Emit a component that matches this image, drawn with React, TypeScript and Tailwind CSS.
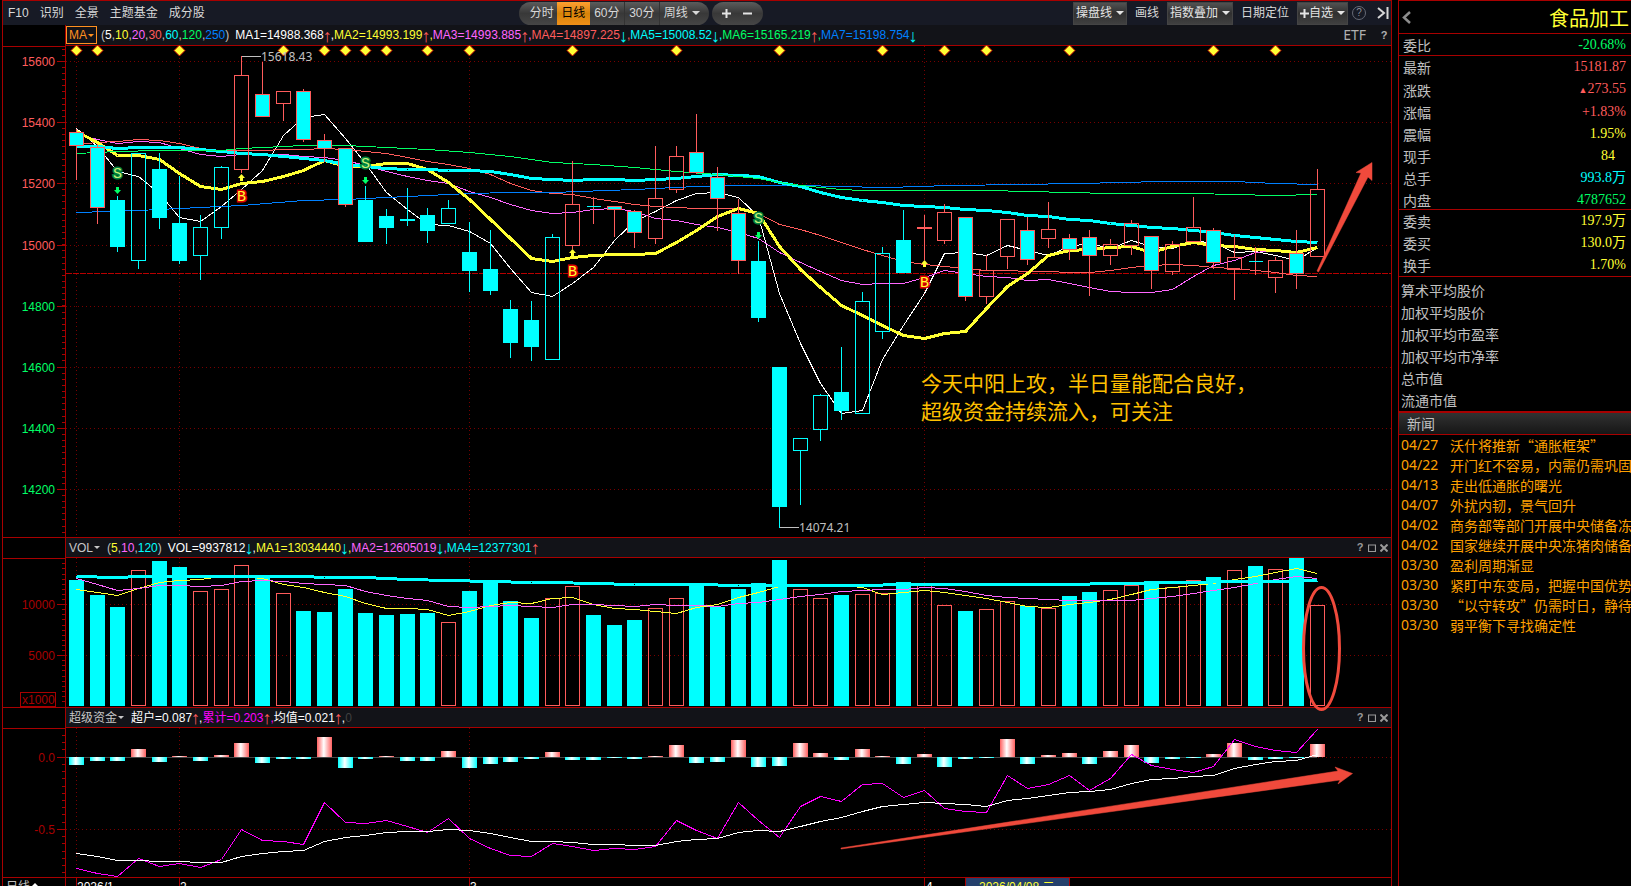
import React from "react";

const RED = "#ff5c5c";
const CYAN = "#00ffff";
const YELLOW = "#ffff33";
const PINK = "#ff66ff";
const GREEN = "#00ff66";
const BLUE = "#0080ff";
const LINE = "#a80000";
const MARK = "#f04a3c";

/* One column per trading day */
const px = (i: number) => Math.floor(76.4 + 20.68 * i);

/* Levels are kept in thirds of a pixel, snapped to the pixel row here */
const row = (v: number, top = 0) => Math.floor(v / 3) + top + 0.5;

type Kind = "c" | "f" | "h" | "k";

/* high, body top, body bottom, low, kind */
const candles: [number, number, number, number, Kind][] = [
  [388, 397, 437, 540, "f"],
  [432, 442, 623, 672, "f"],
  [588, 600, 741, 756, "c"],
  [460, 460, 782, 807, "k"],
  [459, 507, 654, 687, "c"],
  [528, 669, 783, 792, "c"],
  [645, 682, 767, 840, "k"],
  [498, 502, 683, 717, "k"],
  [169, 226, 509, 518, "h"],
  [186, 283, 350, 350, "f"],
  [274, 274, 311, 363, "h"],
  [267, 274, 419, 426, "f"],
  [402, 421, 445, 486, "f"],
  [445, 445, 614, 621, "f"],
  [558, 600, 726, 726, "c"],
  [627, 648, 684, 732, "c"],
  [564, 657, 663, 678, "c"],
  [624, 645, 693, 729, "c"],
  [600, 625, 671, 671, "k"],
  [666, 756, 813, 876, "c"],
  [690, 807, 873, 885, "c"],
  [900, 927, 1029, 1074, "c"],
  [903, 960, 1041, 1083, "c"],
  [702, 712, 1079, 1079, "k"],
  [483, 613, 738, 747, "h"],
  [593, 619, 619, 672, "f"],
  [618, 619, 629, 711, "f"],
  [630, 634, 698, 744, "f"],
  [438, 595, 716, 732, "h"],
  [438, 469, 570, 579, "h"],
  [342, 457, 518, 522, "f"],
  [501, 532, 597, 693, "f"],
  [597, 640, 782, 822, "f"],
  [723, 783, 954, 966, "c"],
  [1101, 1101, 1521, 1582, "c"],
  [1315, 1315, 1352, 1515, "k"],
  [1182, 1186, 1289, 1323, "k"],
  [1041, 1176, 1233, 1260, "c"],
  [876, 904, 1241, 1241, "k"],
  [741, 760, 995, 1017, "k"],
  [630, 720, 819, 819, "c"],
  [645, 682, 687, 780, "h"],
  [612, 637, 722, 732, "h"],
  [652, 652, 890, 903, "f"],
  [765, 811, 890, 912, "h"],
  [657, 657, 770, 807, "h"],
  [651, 691, 779, 795, "f"],
  [606, 688, 717, 744, "h"],
  [702, 715, 749, 780, "f"],
  [690, 712, 767, 888, "f"],
  [717, 733, 767, 795, "h"],
  [660, 670, 737, 765, "h"],
  [709, 709, 812, 867, "f"],
  [723, 733, 815, 825, "h"],
  [591, 682, 725, 725, "h"],
  [684, 691, 788, 807, "f"],
  [705, 772, 808, 900, "h"],
  [741, 784, 784, 825, "f"],
  [771, 781, 833, 879, "h"],
  [690, 760, 821, 867, "f"],
  [507, 568, 770, 770, "h"],
];

const ma5 = [
  385, 440, 515, 528, 580, 652, 663, 618, 568, 510, 405, 352, 343, 415, 490, 578, 628, 672, 677, 695, 730,
  805, 876, 890, 850, 803, 720, 665, 633, 602, 580, 577, 592, 650, 880, 1030, 1150, 1240, 1230, 1078, 975,
  880, 761, 758, 766, 736, 752, 766, 740, 730, 745, 722, 738, 745, 725, 728, 758, 755, 765, 782, 742,
];
const ma10 = [
  395, 428, 465, 466, 478, 520, 559, 569, 551, 545, 530, 510, 480, 500, 500, 491, 491, 507, 548, 597, 657,
  715, 775, 784, 773, 767, 763, 763, 760, 727, 690, 648, 624, 640, 740, 808, 862, 916, 945, 975, 1005, 1016,
  1000, 994, 925, 858, 820, 765, 750, 748, 741, 740, 757, 740, 728, 736, 740, 748, 752, 757, 743,
];
const ma20 = [
  403, 418, 430, 425, 428, 446, 463, 469, 463, 463, 464, 468, 473, 482, 495, 515, 530, 541, 551, 573, 592,
  614, 630, 639, 637, 628, 625, 635, 655, 662, 672, 682, 697, 715, 758, 788, 815, 842, 853, 851, 850, 833,
  811, 820, 829, 832, 840, 838, 850, 862, 873, 877, 877, 867, 829, 797, 782, 758, 750, 753, 740,
];
const ma30 = [
  432, 428, 425, 418, 421, 430, 444, 450, 451, 450, 449, 448, 445, 447, 455, 461, 473, 484, 492, 506, 524,
  549, 572, 580, 583, 594, 604, 613, 619, 623, 625, 626, 626, 640, 672, 688, 705, 728, 748, 765, 785, 794,
  799, 805, 811, 812, 813, 815, 816, 818, 810, 803, 795, 793, 797, 802, 806, 810, 818, 826, 830,
];
const ma60 = [
  438, 440, 446, 442, 442, 443, 449, 455, 459, 464, 469, 475, 482, 493, 500, 504, 507, 509, 511, 512, 514,
  523, 535, 538, 541, 538, 539, 541, 538, 535, 529, 523, 526, 530, 546, 560, 577, 592, 601, 608, 615, 619,
  623, 628, 632, 638, 645, 650, 657, 662, 671, 677, 682, 686, 690, 696, 705, 711, 717, 723, 728,
];

/* Slow lines are given by their turning points: day, level */
const ma120: [number, number][] = [
  [0, 460], [2, 455], [4, 451], [7, 450], [8, 445], [10, 440], [11, 436], [13, 437], [15, 442], [17, 447],
  [19, 457], [21, 469], [23, 486], [25, 493], [27, 502], [29, 514], [31, 522], [33, 535], [34, 546],
  [35, 556], [36, 563], [37, 568], [38, 571], [44, 572], [48, 576], [50, 579], [54, 581], [58, 585], [60, 583],
];
const ma250: [number, number][] = [
  [0, 637], [3, 630], [5, 625], [8, 615], [11, 602], [13, 597], [16, 590], [19, 581], [21, 577], [23, 576],
  [27, 568], [30, 560], [32, 556], [35, 556], [39, 562], [41, 560], [42, 557], [46, 554], [48, 550],
  [51, 548], [52, 545], [56, 545], [58, 549], [60, 553],
];

const volume = [
  135, 180, 216, 106, 78, 96, 169, 163, 91, 126, 175, 228, 231, 162, 234, 240, 237, 234, 262, 168, 138, 198,
  249, 190, 154, 240, 270, 255, 220, 190, 150, 216, 162, 144, 75, 163, 190, 180, 178, 175, 141, 150, 211, 228,
  223, 199, 213, 220, 183, 171, 166, 151, 138, 157, 136, 126, 106, 93, 103, 69, 211,
];
const volumeUp = [3, 6, 7, 8, 10, 18, 23, 24, 28, 29, 35, 36, 38, 39, 41, 42, 44, 45, 47, 50, 51, 53, 54, 56, 58, 60];
const volMa5 = [
  163, 172, 181, 160, 142, 136, 132, 125, 125, 130, 147, 157, 171, 183, 205, 220, 220, 223, 240, 229, 210,
  202, 205, 190, 187, 208, 219, 223, 229, 235, 218, 208, 187, 173, 154, 151, 151, 151, 156, 178, 172, 166,
  172, 181, 190, 202, 213, 217, 208, 201, 192, 178, 163, 157, 150, 144, 133, 123, 111, 100, 115,
];
const volMa10 = [
  130, 148, 166, 160, 152, 151, 154, 151, 140, 136, 139, 145, 148, 151, 168, 181, 189, 196, 213, 217, 214,
  211, 214, 216, 209, 208, 211, 214, 209, 211, 211, 213, 206, 202, 193, 184, 178, 169, 165, 163, 163, 157,
  160, 168, 182, 186, 190, 192, 196, 196, 196, 196, 190, 184, 175, 166, 156, 146, 133, 125, 130,
];
const volMa120: [number, number][] = [
  [0, 125], [2, 127], [3, 125], [11, 125], [12, 127], [14, 128], [15, 130], [16, 133], [18, 136], [20, 139],
  [22, 142], [23, 143], [25, 146], [27, 148], [30, 149], [32, 152], [38, 152], [40, 149], [48, 148],
  [50, 146], [54, 143], [56, 140], [58, 139], [60, 137],
];

const fund = [
  690, 678, 678, 642, 681, 663, 678, 660, 624, 684, 672, 672, 606, 699, 672, 663, 678, 678, 648, 699, 687,
  681, 672, 651, 675, 675, 669, 672, 663, 630, 684, 681, 615, 696, 693, 624, 654, 675, 642, 663, 687, 657,
  696, 672, 669, 612, 687, 660, 654, 687, 648, 630, 684, 672, 669, 657, 624, 675, 672, 669, 627,
];
const fundTotal = [
  1000, 1015, 1024, 970, 994, 985, 997, 972, 883, 915, 919, 928, 802, 861, 865, 856, 874, 892, 850, 909, 940,
  961, 964, 925, 934, 946, 940, 943, 934, 856, 886, 909, 802, 856, 907, 814, 784, 799, 748, 745, 787, 766,
  820, 828, 832, 720, 760, 748, 720, 766, 730, 659, 690, 704, 712, 694, 613, 634, 646, 653, 583,
];
const fundMean = [
  955, 965, 976, 976, 979, 979, 982, 982, 965, 956, 950, 946, 919, 907, 901, 892, 889, 889, 883, 886, 895,
  907, 919, 919, 922, 928, 928, 931, 931, 919, 913, 909, 892, 886, 889, 874, 859, 847, 829, 814, 808, 802,
  805, 808, 814, 796, 790, 781, 772, 769, 763, 745, 734, 730, 724, 720, 700, 688, 680, 676, 658,
];

const diamonds = [0, 1, 5, 10, 12, 13, 14, 15, 17, 19, 24, 29, 34, 39, 42, 44, 48, 55, 58];
const months = [0, 5, 19, 41];

const range = (n: number) => Array.from({ length: n }, (_, i) => i);

type PlotProps = {
  data: number[] | [number, number][];
  color: string;
  top?: number;
  width?: number;
};

const Plot = ({ data, color, top = 0, width = 1 }: PlotProps) => (
  <polyline
    points={data
      .map((d, i) => (Array.isArray(d) ? `${px(d[0]) + 0.5},${row(d[1], top)}` : `${px(i) + 0.5},${row(d, top)}`))
      .join(" ")}
    fill="none"
    stroke={color}
    strokeWidth={width}
    shapeRendering="crispEdges"
  />
);

type GridProps = { top: number; bottom: number; levels: number[] };

const Grid = ({ top, bottom, levels }: GridProps) => (
  <g stroke="#780000" strokeDasharray="1 3" shapeRendering="crispEdges">
    {months.map((m) => (
      <line key={m} x1={px(m) + 0.5} x2={px(m) + 0.5} y1={top} y2={bottom} />
    ))}
    {levels.map((l) => (
      <line key={l} x1={66} x2={1391} y1={l + 0.5} y2={l + 0.5} />
    ))}
  </g>
);

type AxisProps = {
  top: number;
  bottom: number;
  labels: { y: number; text: string; color: string }[];
  ticks: number[];
};

const Axis = ({ top, bottom, labels, ticks }: AxisProps) => (
  <g>
    <g stroke={LINE} shapeRendering="crispEdges">
      <line x1={65.5} x2={65.5} y1={top} y2={bottom} />
      <line x1={3} x2={65} y1={top + 1.5} y2={top + 1.5} />
      <line x1={66} x2={1391} y1={top + 0.5} y2={top + 0.5} />
      {ticks.map((t) => (
        <line key={t} x1={62} x2={65} y1={Math.floor(t) + 0.5} y2={Math.floor(t) + 0.5} />
      ))}
      {labels.map((l) => (
        <line key={l.text} x1={57} x2={65} y1={l.y + 0.5} y2={l.y + 0.5} />
      ))}
    </g>
    {labels.map((l) => (
      <text key={l.text} x={55} y={l.y + 5} textAnchor="end" fontSize={12} fill={l.color}>
        {l.text}
      </text>
    ))}
  </g>
);

const Signal = ({ day, y, buy }: { day: number; y: number; buy?: boolean }) => {
  const x = px(day) + 0.5;
  return (
    <g>
      {buy ? (
        <path d={`M${x} ${y - 22} l3.5 4 h-2 v3 h-3 v-3 h-2z`} fill={YELLOW} />
      ) : (
        <path d={`M${x} ${y + 21} l3.5 -4 h-2 v-3 h-3 v3 h-2z`} fill={GREEN} />
      )}
      <text
        x={x}
        y={y + 5}
        textAnchor="middle"
        fontSize={15}
        fontWeight={400}
        paintOrder="stroke"
        strokeWidth={3}
        stroke={buy ? "#e00000" : "#00803c"}
        fill={buy ? "#ffff33" : "#c8f07a"}
        className="font-['Liberation_Mono',monospace]"
      >
        {buy ? "B" : "S"}
      </text>
    </g>
  );
};

const priceLabels = [
  { y: 61, text: "15600", color: RED },
  { y: 122, text: "15400", color: RED },
  { y: 183, text: "15200", color: RED },
  { y: 245, text: "15000", color: RED },
  { y: 306, text: "14800", color: GREEN },
  { y: 367, text: "14600", color: GREEN },
  { y: 428, text: "14400", color: GREEN },
  { y: 489, text: "14200", color: GREEN },
];

const PriceChart = () => (
  <svg viewBox="3 45 1388 492" className="relative z-10 block h-auto w-full shrink-0 overflow-visible">
    <Grid top={46} bottom={536} levels={priceLabels.map((l) => l.y)} />
    <Axis top={45} bottom={537} labels={priceLabels} ticks={range(80).map((i) => 49.1 + 6.115 * i).filter((t) => t < 536)} />
    <line x1={66} x2={1391} y1={273.5} y2={273.5} stroke="#b80000" strokeDasharray="6 1" shapeRendering="crispEdges" />

    {diamonds.map((d) => (
      <path key={d} d={`M${px(d) + 0.5} 45 l5.5 5.5 l-5.5 5.5 l-5.5 -5.5z`} fill={YELLOW} stroke="#c00000" strokeWidth={1} />
    ))}

    <Plot data={ma5} color="#ffffff" />
    <Plot data={ma20} color={PINK} />
    <Plot data={ma30} color={RED} />
    <Plot data={ma250} color={BLUE} />
    <Plot data={ma10} color={YELLOW} width={3} />
    <Plot data={ma60} color={CYAN} width={3} />
    <Plot data={ma120} color={GREEN} />

    <g shapeRendering="crispEdges">
      {candles.map(([high, top, bottom, low, kind], i) => {
        const x = px(i) + 0.5;
        const edge = kind === "f" || kind === "h" ? RED : CYAN;
        const fill = kind === "f" || kind === "c" ? CYAN : "none";
        return (
          <g key={i} stroke={edge}>
            <line x1={x} x2={x} y1={Math.floor(high / 3)} y2={row(top)} />
            <line x1={x} x2={x} y1={row(bottom - 1)} y2={Math.ceil(low / 3)} />
            {bottom === top ? (
              <line x1={x - 7} x2={x + 7} y1={row(top)} y2={row(top)} stroke={CYAN} />
            ) : (
              <rect x={x - 7} y={row(top)} width={14} height={row(bottom - 1) - row(top)} fill={fill} />
            )}
          </g>
        );
      })}
    </g>

    <Signal day={2} y={173} />
    <Signal day={14} y={163} />
    <Signal day={33} y={218} />
    <Signal day={8} y={196} buy />
    <Signal day={24} y={271} buy />
    <Signal day={41} y={282} buy />

    {/* highest and lowest price */}
    <g fill="#c0c0c0" fontSize={12} className="font-['Noto_Sans',sans-serif]">
      <path d="M242 56.5h19M780 527.5h19" stroke="#c0c0c0" shapeRendering="crispEdges" />
      <text x={261} y={61}>15618.43</text>
      <text x={799} y={532}>14074.21</text>
    </g>

    <g fill="#ffc000" fontSize={21}>
      <text x={921} y={391}>今天中阳上攻，半日量能配合良好，</text>
      <text x={921} y={419}>超级资金持续流入，可关注</text>
    </g>

    <path d="M1317 271 L1361 173 L1356 172.5 L1372 162.5 L1372 180.5 L1368 177 L1318.5 272z" fill={MARK} stroke={MARK} strokeWidth={0.5} />
  </svg>
);

const VolumeChart = () => (
  <svg viewBox="3 557 1388 150" className="relative z-10 block h-auto w-full shrink-0 overflow-visible">
    <Grid top={558} bottom={706} levels={[604, 655]} />
    <Axis
      top={557}
      bottom={707}
      labels={[
        { y: 604, text: "10000", color: "#a80000" },
        { y: 655, text: "5000", color: "#a80000" },
      ]}
      ticks={range(29).map((i) => 558.7 + 5.1 * i)}
    />
    <rect x={20.5} y={692.5} width={35} height={14} fill="none" stroke={LINE} shapeRendering="crispEdges" />
    <text x={22} y={704} fontSize={12} fill={LINE}>x1000</text>

    <g shapeRendering="crispEdges">
      {volume.map((v, i) => {
        const up = volumeUp.includes(i);
        return (
          <rect
            key={i}
            x={px(i) - 6.5}
            y={row(v, 535)}
            width={14}
            height={705.5 - row(v, 535)}
            fill={up ? "none" : CYAN}
            stroke={up ? RED : CYAN}
          />
        );
      })}
    </g>
    <Plot data={volMa5} color={YELLOW} top={535} />
    <Plot data={volMa10} color={PINK} top={535} />
    <Plot data={volMa120} color={CYAN} top={535} width={3} />
    <ellipse cx={1321.5} cy={648.5} rx={18} ry={61} fill="none" stroke={MARK} strokeWidth={3} />
  </svg>
);

const FundChart = () => (
  <svg viewBox="3 727 1388 150" className="relative z-10 block h-auto w-full shrink-0 overflow-visible">
    <defs>
      <linearGradient id="inflow">
        <stop offset="0" stopColor="#ff6060" />
        <stop offset="0.45" stopColor="#ffffff" />
        <stop offset="1" stopColor="#ff6060" />
      </linearGradient>
      <linearGradient id="outflow">
        <stop offset="0" stopColor="#00ffff" />
        <stop offset="0.45" stopColor="#ffffff" />
        <stop offset="1" stopColor="#00ffff" />
      </linearGradient>
    </defs>
    <Grid top={728} bottom={876} levels={[757, 829]} />
    <Axis
      top={727}
      bottom={877}
      labels={[
        { y: 757, text: "0.0", color: "#a80000" },
        { y: 829, text: "-0.5", color: "#a80000" },
      ]}
      ticks={range(20).map((i) => 735.5 + 7.22 * i)}
    />
    <line x1={66} x2={1317} y1={757.5} y2={757.5} stroke="#484848" shapeRendering="crispEdges" />
    {fund.map((v, i) => {
      const y = v / 3 + 535;
      return v < 666 ? (
        <rect key={i} x={px(i) - 7} y={y} width={15} height={757 - y} fill="url(#inflow)" />
      ) : (
        <rect key={i} x={px(i) - 7} y={757} width={15} height={y - 757} fill="url(#outflow)" />
      );
    })}
    <Plot data={fundTotal} color="#ff00ff" top={535} />
    <Plot data={fundMean} color="#ffffff" top={535} />
    <path d="M841 848 L1338 771 L1335 767 L1352.5 773.5 L1338 784 L1340 780 L841 849z" fill={MARK} stroke={MARK} strokeWidth={0.5} />
  </svg>
);

const DateAxis = () => (
  <svg viewBox="3 877 1388 20" className="block h-auto w-full shrink-0">
    <path
      d="M3 877.5H1391M65.5 877v20M76.5 877v20M179.5 877v20M469.5 877v20M924.5 877v20"
      stroke={LINE}
      shapeRendering="crispEdges"
    />
    <rect x={965.5} y={877.5} width={104} height={20} fill="#24406c" stroke={LINE} shapeRendering="crispEdges" />
    <g fontSize={12} fill="#ffffff">
      <text x={6} y={891} fill="#c0c0c0">日线</text>
      <path d="M31 887l4 -4 4 4z" />
      <text x={77} y={891}>2026/1</text>
      <text x={180} y={891}>2</text>
      <text x={470} y={891}>3</text>
      <text x={926} y={891}>4</text>
      <text x={979} y={891} fill={YELLOW}>2026/04/08 二</text>
    </g>
  </svg>
);

const Caret = () => <span className="inline-block border-x-4 border-t-4 border-x-transparent border-t-current" />;
const SmallCaret = () => <span className="inline-block border-x-3 border-t-3 border-x-transparent border-t-current" />;

const PlusIcon = () => (
  <svg viewBox="0 0 9 9" className="size-[9px]">
    <path d="M0 4.5h9M4.5 0v9" stroke="#e4e4e4" strokeWidth={2} />
  </svg>
);

const toolButton =
  "flex h-[23px] items-center gap-1 border border-[#444] bg-linear-to-b from-[#525252] via-[#303030] to-[#404040] px-[2px] text-[#e4e4e4]";

const Toolbar = () => (
  <header className="flex h-6 shrink-0 items-center justify-between bg-[#171a25] text-xs whitespace-nowrap text-[#d8d8d8]">
    <nav className="flex gap-[11px] pr-1 pl-[5px]">
      <a href="#">F10</a>
      <a href="#">识别</a>
      <a href="#">全景</a>
      <a href="#">主题基金</a>
      <a href="#">成分股</a>
    </nav>

    <div className="flex gap-[3px]">
      <div className="flex h-[23px] overflow-hidden rounded-full bg-linear-to-b from-[#5c5c5c] via-[#383838] to-[#464646]">
        <button className="w-[38px] pl-2">分时</button>
        <button className="w-[33px] bg-linear-to-b from-[#ffa030] via-[#d88408] to-[#f09018] text-black">日线</button>
        <button className="w-[35px] border-r border-[#333]">60分</button>
        <button className="w-[35px] border-r border-[#333]">30分</button>
        <button className="flex w-[49px] items-center gap-1 pl-1" aria-haspopup="menu">
          周线
          <Caret />
        </button>
      </div>
      <div className="flex h-[23px] w-[51px] items-center justify-center gap-3 rounded-full bg-linear-to-b from-[#5c5c5c] via-[#383838] to-[#464646]">
        <button aria-label="放大">
          <PlusIcon />
        </button>
        <button aria-label="缩小">
          <svg viewBox="0 0 9 9" className="size-[9px]"><path d="M0 4.5h9" stroke="#e4e4e4" strokeWidth={2} /></svg>
        </button>
      </div>
    </div>

    <div className="flex items-center gap-2 pr-[2px]">
      <button className={toolButton} aria-haspopup="menu">
        操盘线
        <Caret />
      </button>
      <button>画线</button>
      <button className={toolButton} aria-haspopup="menu">
        指数叠加
        <Caret />
      </button>
      <button>日期定位</button>
      <button className={toolButton} aria-haspopup="menu">
        <span className="flex items-center">
          <PlusIcon />
          自选
        </span>
        <Caret />
      </button>
      <button className="-ml-1 flex size-[14px] items-center justify-center rounded-full border border-[#666a76] text-[10px] text-[#8a8e98]">?</button>
      <button className="ml-[3px]" aria-label="收起">
        <svg viewBox="0 0 12 12" className="size-3" fill="none" stroke="#d8d8d8" strokeWidth={2}>
          <path d="M1 1l6 5-6 5M10.5 0v12" />
        </svg>
      </button>
    </div>
  </header>
);

const arrow = "inline-flex h-3 w-[7px] items-center justify-center align-middle text-[18px] leading-3";

const Up = () => <span className={`${arrow} text-[#ff5c5c]`}>↑</span>;
const Down = () => <span className={`${arrow} text-[#00ffff]`}>↓</span>;

const PaneControls = () => (
  <div className="ml-auto flex items-center gap-1 pr-[3px] text-[#9a9a9a]">
    <button className="w-2 text-[11px] font-bold">?</button>
    <button aria-label="最大化">
      <svg viewBox="0 0 8 8" className="size-2" fill="none" stroke="currentColor"><path d="M0.5 1h7v6.5h-7z M0 1h8" strokeWidth={1.2} /></svg>
    </button>
    <button aria-label="关闭">
      <svg viewBox="0 0 8 8" className="size-2" stroke="currentColor" strokeWidth={2}><path d="M0.5 0.5l7 7M7.5 0.5l-7 7" /></svg>
    </button>
  </div>
);

type PaneHeaderProps = { children: React.ReactNode; first?: boolean };

const PaneHeader = ({ children, first }: PaneHeaderProps) => (
  <div className={`flex h-5 shrink-0 pl-[62px] ${first ? "" : "border-t border-[#a80000]"}`}>
    <div className="flex flex-1 items-center border-l border-[#a80000] bg-[#121318] text-xs whitespace-nowrap">
      {children}
    </div>
  </div>
);

type Stat = { label: string; value: React.ReactNode; color: string; inset?: boolean };

const quote: Stat[] = [
  { label: "最新", value: "15181.87", color: "text-[#ff5c5c]" },
  { label: "涨跌", value: <><span className="text-[9px]">▲</span>273.55</>, color: "text-[#ff5c5c]" },
  { label: "涨幅", value: "+1.83%", color: "text-[#ff5c5c]" },
  { label: "震幅", value: "1.95%", color: "text-[#ffff33]" },
  { label: "现手", value: "84", color: "text-[#ffff33]", inset: true },
  { label: "总手", value: "993.8万", color: "text-[#00ffff]" },
  { label: "内盘", value: "4787652", color: "text-[#00ff66]" },
];

const orders: Stat[] = [
  { label: "委卖", value: "197.9万", color: "text-[#ffff33]" },
  { label: "委买", value: "130.0万", color: "text-[#ffff33]" },
  { label: "换手", value: "1.70%", color: "text-[#ffff33]" },
];

const averages = ["算术平均股价", "加权平均股价", "加权平均市盈率", "加权平均市净率", "总市值", "流通市值"];

const news = [
  ["04/27", "沃什将推新“通胀框架”"],
  ["04/22", "开门红不容易，内需仍需巩固"],
  ["04/13", "走出低通胀的曙光"],
  ["04/07", "外扰内韧，景气回升"],
  ["04/02", "商务部等部门开展中央储备冻"],
  ["04/02", "国家继续开展中央冻猪肉储备"],
  ["03/30", "盈利周期渐显"],
  ["03/30", "紧盯中东变局，把握中国优势"],
  ["03/30", "“以守转攻”仍需时日，静待"],
  ["03/30", "弱平衡下寻找确定性"],
];

const Stats = ({ rows }: { rows: Stat[] }) => (
  <table className="w-full text-sm leading-[22px]">
    <tbody>
      {rows.map((r) => (
        <tr key={r.label}>
          <th scope="row" className="h-[22px] p-0 pl-1 text-left font-normal text-[#c0c0c0]">
            {r.label}
          </th>
          <td
            className={`h-[22px] p-0 text-right font-['Liberation_Serif','Noto_Sans_CJK_SC',serif] ${
              r.inset ? "pr-4" : "pr-[5px]"
            } ${r.color}`}
          >
            {r.value}
          </td>
        </tr>
      ))}
    </tbody>
  </table>
);

const Sidebar = () => (
  <aside className="w-[233px] shrink-0 overflow-hidden border-t border-l border-[#a80000] font-['Noto_Sans_CJK_SC',sans-serif]">
    <div className="flex h-[33px] items-center justify-between border-b border-[#a80000] pr-[2px] pl-[3px]">
      <button aria-label="返回">
        <svg viewBox="0 0 9 13" className="h-[13px] w-[9px]" fill="none" stroke="#8c8c8c" strokeWidth={2.5}>
          <path d="M8 1L2 6.5l6 5.5" />
        </svg>
      </button>
      <h1 className="pt-[2px] text-[20px] leading-8 text-[#ffff33]">食品加工</h1>
    </div>
    <div className="h-[22px] border-b border-[#a80000]">
      <Stats rows={[{ label: "委比", value: "-20.68%", color: "text-[#00ff66]" }]} />
    </div>
    <div className="h-[154px] border-b border-[#a80000]">
      <Stats rows={quote} />
    </div>
    <div className="border-b border-[#a80000]">
      <Stats rows={orders} />
    </div>
    <ul className="h-[136px] border-b-2 border-[#a80000] pt-[2px] pl-[2px] text-sm leading-[22px] text-[#c0c0c0]">
      {averages.map((a) => (
        <li key={a}>{a}</li>
      ))}
    </ul>
    <h2 className="h-[22px] border-b border-[#a80000] bg-linear-to-b from-[#323232] to-[#161616] pl-2 text-sm leading-5 text-[#c0c0c0]">
      新闻
    </h2>
    <ul className="pl-[2px] text-sm leading-5 whitespace-nowrap text-[#ffa000]">
      {news.map(([date, title]) => (
        <li key={title}>
          <a href="#" className="flex">
            <span className="w-[49px] shrink-0 font-['Noto_Sans',sans-serif]">{date}</span>
            <span>{title}</span>
          </a>
        </li>
      ))}
    </ul>
  </aside>
);

const App = () => {
  return (
    <div className="flex h-screen gap-[6px] overflow-hidden bg-black pl-[2px] font-['Liberation_Sans','Noto_Sans_CJK_SC',sans-serif]">
      <main className="flex min-w-0 flex-1 flex-col border-x border-t border-[#a80000]">
        <Toolbar />

        <PaneHeader first>
          <button className="flex h-[18px] items-center gap-px border border-[#ff9020] px-[2px] text-[#ff9020]" aria-haspopup="menu">
            MA
            <SmallCaret />
          </button>
          <span className="ml-1 text-[#c0c0c0]">
            (<span className="text-white">5</span>,<span className="text-[#ffff33]">10</span>,
            <span className="text-[#ff66ff]">20</span>,<span className="text-[#ff5c5c]">30</span>,
            <span className="text-[#00ffff]">60</span>,<span className="text-[#00ff66]">120</span>,
            <span className="text-[#0080ff]">250</span>)
          </span>
          <span className="ml-[6px] text-white">MA1=14988.368<Up />,</span>
          <span className="text-[#ffff33]">MA2=14993.199<Up />,</span>
          <span className="text-[#ff66ff]">MA3=14993.885<Up />,</span>
          <span className="text-[#ff5c5c]">MA4=14897.225<Down />,</span>
          <span className="text-[#00ffff]">MA5=15008.52<Down />,</span>
          <span className="text-[#00ff66]">MA6=15165.219<Up />,</span>
          <span className="text-[#0080ff]">MA7=15198.754<Down /></span>
          <div className="ml-auto flex items-center gap-[14px] pr-[3px] text-[#b0b0b0]">
            <button className="font-['Noto_Sans',sans-serif] text-sm">ETF</button>
            <button className="w-2 text-[11px] font-bold">?</button>
          </div>
        </PaneHeader>
        <PriceChart />

        <PaneHeader>
          <button className="ml-[3px] flex items-center gap-px text-[#c8c8c8]" aria-haspopup="menu">
            VOL
            <SmallCaret />
          </button>
          <span className="ml-[7px] text-[#c0c0c0]">
            (<span className="text-[#ffff33]">5</span>,<span className="text-[#ff66ff]">10</span>,
            <span className="text-[#00ffff]">120</span>)
          </span>
          <span className="ml-[6px] text-white">VOL=9937812<Down />,</span>
          <span className="text-[#ffff33]">MA1=13034440<Down />,</span>
          <span className="text-[#ff66ff]">MA2=12605019<Down />,</span>
          <span className="text-[#00ffff]">MA4=12377301<Up /></span>
          <PaneControls />
        </PaneHeader>
        <VolumeChart />

        <PaneHeader>
          <button className="ml-[3px] flex items-center gap-px text-[#c8c8c8]" aria-haspopup="menu">
            超级资金
            <SmallCaret />
          </button>
          <span className="ml-[7px] text-white">超户=0.087<Up />,</span>
          <span className="text-[#ff00ff]">累计=0.203<Up />,</span>
          <span className="text-white">均值=0.021<Up />,</span>
          <span className="text-[#404040]">0</span>
          <PaneControls />
        </PaneHeader>
        <FundChart />
        <DateAxis />
      </main>

      <Sidebar />
    </div>
  );
};

export default App;
